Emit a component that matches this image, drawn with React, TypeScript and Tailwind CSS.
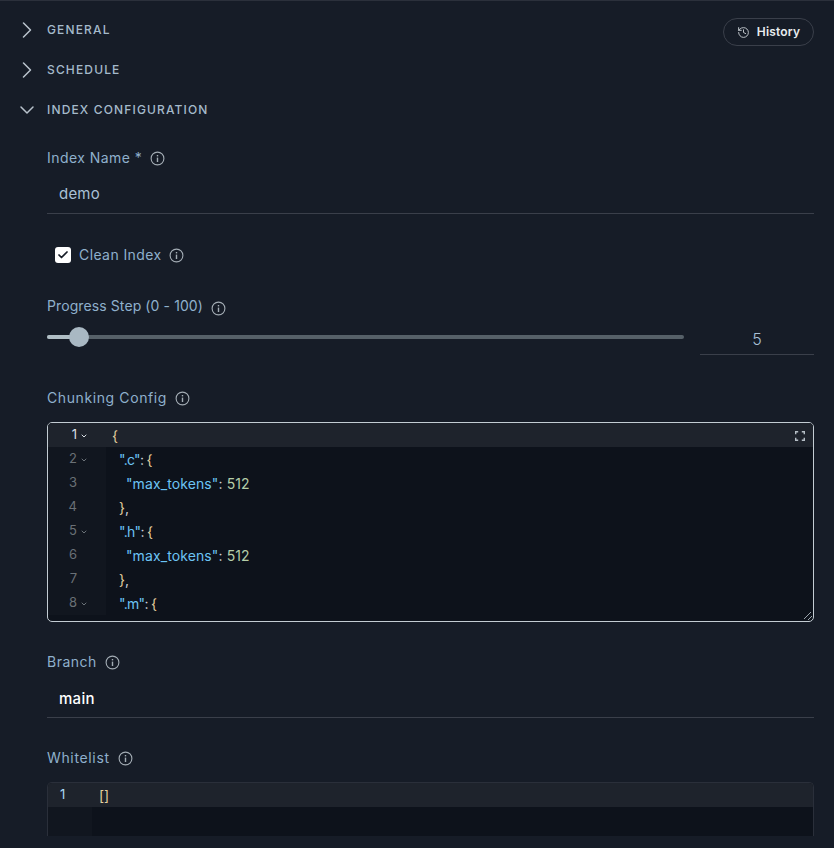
import React from 'react';
import { ChevronRight, ChevronDown, History, Check } from 'lucide-react';

const font = "font-['Inter','Liberation_Sans',sans-serif]";

const InfoIcon = () => (
  <svg width="15" height="15" viewBox="0 0 15 15" fill="none" className="shrink-0 text-[#a4adb5]">
    <circle cx="7.5" cy="7.5" r="6.4" stroke="currentColor" strokeWidth="1.1" />
    <rect x="6.8" y="6.6" width="1.4" height="4.4" fill="currentColor" />
    <rect x="6.8" y="4" width="1.4" height="1.4" fill="currentColor" />
  </svg>
);

const Label = ({ text, tracking }: { text: string; tracking: string }) => (
  <div className="flex items-center gap-2">
    <span className={`text-[14px] leading-5 text-[#8fb0cc] ${tracking}`}>{text}</span>
    <InfoIcon />
  </div>
);

const Section = ({ title, open, children }: { title: string; open?: boolean; children?: React.ReactNode }) => (
  <div className="flex items-center justify-between h-10">
    <div className="flex items-center">
      <div className="w-[47px] flex justify-center pl-[7px]">
        {open ? (
          <ChevronDown size={24} strokeWidth={1.5} className="text-[#b8c2cc]" />
        ) : (
          <ChevronRight size={28} strokeWidth={1.3} className="text-[#b8c2cc]" />
        )}
      </div>
      <span className="text-[12px] font-medium tracking-[1.15px] text-[#a5bacb]">{title}</span>
    </div>
    {children}
  </div>
);

const P = ({ c }: { c: string }) => <span className="text-[#e3cf9e]">{c}</span>;
const K = ({ c }: { c: string }) => <span className="text-[#6cc4f5]">{c}</span>;
const W = ({ c }: { c: string }) => <span className="text-[#c9d1d9]">{c}</span>;
const N = ({ c }: { c: string }) => <span className="text-[#b5cea8]">{c}</span>;

const lines: { fold?: boolean; indent: number; tight?: boolean; node: React.ReactNode }[] = [
  { fold: true, indent: 0, node: <P c="{" /> },
  { fold: true, indent: 1, tight: true, node: <><K c='".c"' /><W c=":" /> <P c="{" /></> },
  { indent: 2, node: <><K c='"max_tokens"' /><W c=":" /> <N c="512" /></> },
  { indent: 1, node: <><P c="}" /><W c="," /></> },
  { fold: true, indent: 1, tight: true, node: <><K c='".h"' /><W c=":" /> <P c="{" /></> },
  { indent: 2, node: <><K c='"max_tokens"' /><W c=":" /> <N c="512" /></> },
  { indent: 1, node: <><P c="}" /><W c="," /></> },
  { fold: true, indent: 1, tight: true, node: <><K c='".m"' /><W c=":" /> <P c="{" /></> },
];

const CodeEditor = () => (
  <div className="relative h-[200px] border border-[#c3ccd3] rounded-[5px] bg-[#0d121b] overflow-hidden">
    {lines.map((l, i) => (
      <div key={i} className={`flex h-6 items-center text-[14px] ${i === 0 ? 'bg-[#1e232c]' : ''}`}>
        <div className={`w-[58px] h-full flex items-center shrink-0 ${i === 0 ? '' : 'bg-[#11161f]'}`}>
          <span className={`w-[29px] text-right text-[13px] ${i === 0 ? 'text-[#d8dee4]' : 'text-[#6a7076]'}`}>{i + 1}</span>
          {l.fold && <ChevronDown size={8} strokeWidth={3} className={`ml-[3px] mt-px ${i === 0 ? 'text-[#d8dee4]' : 'text-[#6b7278]'}`} />}
        </div>
        <div className={`pl-[6px] ${l.tight ? 'tracking-[-0.7px]' : 'tracking-[0.1px]'}`} style={{ marginLeft: l.indent * 7 }}>{l.node}</div>
      </div>
    ))}
    <svg width="10" height="10" viewBox="0 0 10 10" fill="none" className="absolute top-[8px] right-[8px] text-[#b5bec6]">
      <path d="M0.7 3.2V0.7H3.2M6.8 0.7H9.3V3.2M9.3 6.8V9.3H6.8M3.2 9.3H0.7V6.8" stroke="currentColor" strokeWidth="1.4" />
    </svg>
    <svg width="10" height="10" viewBox="0 0 10 10" fill="none" className="absolute bottom-0 right-0 text-[#9aa3ab]">
      <path d="M1 8L8 1M5 9L9 5" stroke="currentColor" strokeWidth="1" />
    </svg>
  </div>
);

const App = () => {
  return (
    <div className={`${font} h-[848px] bg-[#161c27] border-t border-t-[#2b303b] overflow-hidden pr-5`}>
      <div className="pt-[9px]">
        <Section title="GENERAL">
          <button className="mt-1 h-7 w-[91px] flex items-center justify-center gap-[7px] rounded-full border border-[#3a3f4a] text-[12px] font-semibold tracking-[0.2px] text-[#e8ecf0]">
            <History size={13} strokeWidth={1.75} className="text-[#c4c9ce]" />
            History
          </button>
        </Section>
        <Section title="SCHEDULE" />
        <Section title="INDEX CONFIGURATION" open />
      </div>

      <div className="pl-[47px]">
        <div className="mt-[18px]">
          <Label text="Index Name *" tracking="tracking-[0.45px]" />
          <div className="mt-[14px] h-[32px] pl-3 pt-px border-b border-[#3a3f4a] text-[15px] text-[#a9c0d6] tracking-[0.2px]">demo</div>
        </div>

        <div className="mt-[33px] ml-2 flex items-center gap-2 h-4">
          <div className="w-4 h-4 bg-white rounded-[3px] flex items-center justify-center">
            <Check size={12} strokeWidth={3.5} className="text-[#161c27]" />
          </div>
          <Label text="Clean Index" tracking="tracking-[0.4px]" />
        </div>

        <div className="mt-[33px]">
          <div className="flex items-center gap-2">
            <span className="text-[14px] leading-5 text-[#8fb0cc] tracking-[0.1px]">Progress Step (0 - 100)</span>
            <span className="mt-1"><InfoIcon /></span>
          </div>
          <div className="flex gap-4 mt-[7px]">
            <div className="relative flex-1 h-[28px] flex items-center">
              <div className="w-full h-1 rounded-full bg-[#566068]" />
              <div className="absolute left-0 w-8 h-1 rounded-l-full bg-[#b0bec5]" />
              <div className="absolute left-[22px] w-5 h-5 rounded-full bg-[#a9b8c3]" />
            </div>
            <div className="w-[114px] h-[32px] flex items-center justify-center border-b border-[#3a3f4a] text-[16px] font-light text-[#a9c0d6]">5</div>
          </div>
        </div>

        <div className="mt-[33px]">
          <Label text="Chunking Config" tracking="tracking-[0.6px]" />
          <div className="mt-[14px]"><CodeEditor /></div>
        </div>

        <div className="mt-[30px]">
          <Label text="Branch" tracking="tracking-[0.5px]" />
          <div className="mt-[14px] h-[32px] pl-3 pt-[2px] border-b border-[#3a3f4a] text-[15px] font-medium text-white tracking-[0.3px]">main</div>
        </div>

        <div className="mt-[30px]">
          <Label text="Whitelist" tracking="tracking-[0.65px]" />
          <div className="mt-[14px] h-[54px] border border-b-0 border-[#2a2f3a] rounded-t-[5px] bg-[#0d121b] overflow-hidden">
            <div className="flex h-6 items-center bg-[#1e232c] text-[14px]">
              <div className="w-[44px] pl-3 text-[13px] text-[#a9d8f5]">1</div>
              <div className="pl-[7px] text-[#e3cf9e]">[]</div>
            </div>
            <div className="w-[44px] h-full bg-[#11161f]" />
          </div>
        </div>
      </div>
    </div>
  );
};

export default App;
